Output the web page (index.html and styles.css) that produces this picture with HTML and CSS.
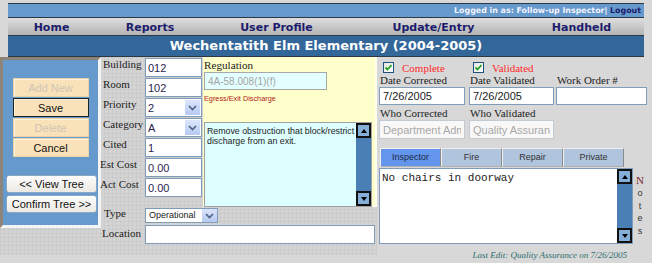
FILE: index.html
```html
<!DOCTYPE html>
<html lang="en">
<head>
<meta charset="utf-8">
<title>Inspection Entry</title>
<link rel="stylesheet" href="styles.css">
</head>
<body>
<header class="hdr">
  <div class="topbar"><span class="who">Logged in as: Follow-up Inspector|</span> <a class="logout" href="#">Logout</a></div>
  <nav class="nav">
    <a href="#">Home</a><a href="#">Reports</a><a href="#">User Profile</a><a href="#">Update/Entry</a><a href="#">Handheld</a>
  </nav>
  <div class="title">Wechentatith Elm Elementary (2004-2005)</div>
</header>
<main class="main">
  <aside class="panel">
    <div class="actions">
      <button class="btn" disabled>Add New</button>
      <button class="btn default">Save</button>
      <button class="btn" disabled>Delete</button>
      <button class="btn">Cancel</button>
    </div>
    <div class="tree">
      <button class="tbtn">&lt;&lt; View Tree</button>
      <button class="tbtn">Confirm Tree &gt;&gt;</button>
    </div>
  </aside>

  <section class="mid">
    <div class="midtop">
      <div class="fields">
        <div class="row"><span class="lbl">Building</span><input class="inp" value="012"></div>
        <div class="row"><span class="lbl">Room</span><input class="inp" value="102"></div>
        <div class="row"><span class="lbl">Priority</span><div class="sel"><span class="val">2</span><span class="arr"><svg viewBox="0 0 9 6" width="9" height="6"><path d="M1 1 L4.5 4.5 L8 1" fill="none" stroke="#4d6185" stroke-width="1.6"/></svg></span></div></div>
        <div class="row"><span class="lbl">Category</span><div class="sel"><span class="val">A</span><span class="arr"><svg viewBox="0 0 9 6" width="9" height="6"><path d="M1 1 L4.5 4.5 L8 1" fill="none" stroke="#4d6185" stroke-width="1.6"/></svg></span></div></div>
        <div class="row"><span class="lbl">Cited</span><input class="inp" value="1"></div>
        <div class="row"><span class="lbl shift">Est Cost</span><input class="inp" value="0.00"></div>
        <div class="row"><span class="lbl shift">Act Cost</span><input class="inp" value="0.00"></div>
      </div>
      <div class="reg">
        <div class="reglbl">Regulation</div>
        <input class="reginp" value="4A-58.008(1)(f)" disabled>
        <div class="regdesc">Egress/Exit Discharge</div>
        <div class="tabox regbox">
          <textarea class="ta regta">Remove obstruction that block/restrict discharge from an exit.</textarea>
          <div class="sb"><span class="sbbtn up"></span><span class="sbbtn down"></span></div>
        </div>
      </div>
    </div>
    <div class="midbot">
      <div class="brow typerow"><span class="lbl2 tlbl">Type</span><div class="sel tsel"><span class="val">Operational</span><span class="arr"><svg viewBox="0 0 9 6" width="9" height="6"><path d="M1 1 L4.5 4.5 L8 1" fill="none" stroke="#4d6185" stroke-width="1.6"/></svg></span></div></div>
      <div class="brow locrow"><span class="lbl2 llbl">Location</span><input class="inp locinp" value=""></div>
    </div>
  </section>

  <section class="right">
    <div class="grid3 checks">
      <div class="chk"><span class="box"><svg viewBox="0 0 11 11" width="11" height="11"><path d="M2.5 5.5 L4.5 7.5 L8.5 3" fill="none" stroke="#21a121" stroke-width="1.8"/></svg></span><span class="chklbl">Complete</span></div>
      <div class="chk"><span class="box"><svg viewBox="0 0 11 11" width="11" height="11"><path d="M2.5 5.5 L4.5 7.5 L8.5 3" fill="none" stroke="#21a121" stroke-width="1.8"/></svg></span><span class="chklbl">Validated</span></div>
      <div></div>
    </div>
    <div class="grid3 rlbls">
      <span>Date Corrected</span><span>Date Validated</span><span>Work Order #</span>
    </div>
    <div class="grid3">
      <input class="rinp w1" value="7/26/2005"><input class="rinp w2" value="7/26/2005"><input class="rinp w3" value="">
    </div>
    <div class="grid3 rlbls rlbls2">
      <span>Who Corrected</span><span>Who Validated</span><span></span>
    </div>
    <div class="grid3">
      <input class="rinp dis w1" value="Department Administrator" disabled><input class="rinp dis w2" value="Quality Assurance" disabled><span></span>
    </div>
    <div class="notes">
      <div class="notesmain">
        <div class="tabs">
          <span class="tab on">Inspector</span><span class="tab">Fire</span><span class="tab">Repair</span><span class="tab">Private</span>
        </div>
        <div class="tabox notebox">
          <textarea class="ta notesta">No chairs in doorway</textarea>
          <div class="sb"><span class="sbbtn up"></span><span class="sbbtn down"></span></div>
        </div>
      </div>
      <div class="vert"><span class="n">N</span><span>o</span><span>t</span><span>e</span><span>s</span></div>
    </div>
    <div class="lastedit">Last Edit: Quality Assurance on 7/26/2005</div>
  </section>
</main>
</body>
</html>
```

FILE: styles.css
```css
* { box-sizing: border-box; }
html, body { margin: 0; padding: 0; }
body {
  width: 652px;
  height: 263px;
  overflow: hidden;
  background: #d8d8d8;
  font-family: "Liberation Serif", serif;
  color: #222;
}

/* ---------- header ---------- */
.hdr {
  margin: 3px 8px 0;
  width: 636px;
  border-top: 1px solid #2c3844;
  border-bottom: 1px solid #2c3844;
}
.topbar {
  height: 14px;
  background: #6699cc;
  border-bottom: 1px solid #2c3844;
  text-align: right;
  padding-right: 3px;
  font: bold 7.9px/13px "DejaVu Sans", sans-serif;
  color: #f2f2ff;
}
.topbar .logout { color: #1c1c6c; text-decoration: none; }
.nav {
  height: 18px;
  border-bottom: 1px solid #2c3844;
  background: linear-gradient(#dedede, #b4b4b4);
  display: grid;
  grid-template-columns: 87px 110px 143px 171px 125px;
  font: bold 11px/15px "DejaVu Sans", sans-serif;
  padding-top: 2px;
}
.nav a { color: #1c1c6c; text-decoration: none; text-align: center; }
.title {
  height: 20px;
  background: #336699;
  color: #fff;
  text-align: center;
  font: bold 13px/20px "DejaVu Sans", sans-serif;
}

/* ---------- main ---------- */
.main {
  display: flex;
  height: 198px;
  background-color: #d4d4d4;
  background-image:
    linear-gradient(rgba(0,0,0,0.035) 1px, transparent 1px),
    linear-gradient(90deg, rgba(0,0,0,0.035) 1px, transparent 1px);
  background-size: 4px 4px;
}

.panel {
  width: 101px;
  height: 171px;
  flex: none;
  background: #6699cc;
  border: 3px solid;
  border-color: #8c8478 #f4f4f4 #f4f4f4 #8c8478;
  display: flex;
  flex-direction: column;
  align-items: center;
  padding-top: 18px;
}
.actions { display: flex; flex-direction: column; gap: 1px; }
.btn {
  width: 76px;
  height: 19px;
  margin: 0;
  padding: 0;
  background: #f9e1b9;
  border: 1px solid #e8d2a8;
  box-shadow: inset 1px 1px 0 #fff3dc;
  font: 11px "Liberation Sans", sans-serif;
  color: #111;
}
.btn:disabled { color: #cfc5b5; }
.btn.default { border-color: #222; }
.tree { display: flex; flex-direction: column; gap: 2px; margin-top: 18px; margin-left: 2px; }
.tbtn {
  width: 91px;
  height: 18px;
  margin: 0;
  padding: 0;
  background: linear-gradient(#fdfdfd, #ece9e2);
  border: 1px solid #8aa8c6;
  border-radius: 3px;
  font: 11px "Liberation Sans", sans-serif;
  color: #111;
}

.mid { width: 276px; flex: none; display: flex; flex-direction: column; }
.midtop { display: flex; height: 150px; }
.fields { width: 102px; padding: 1px 0 0 2px; }
.row { display: flex; height: 20px; }
.lbl {
  width: 42px;
  font-size: 11px;
  line-height: 13px;
  white-space: nowrap;
}
.lbl.shift { margin-left: -3px; width: 45px; }
.inp {
  width: 57px;
  height: 19px;
  margin: 0;
  border: 1px solid #7f9db9;
  background: #fff;
  padding: 1px 2px 0;
  font: 11px "Liberation Sans", sans-serif;
  color: #2b1d4f;
}
.sel {
  width: 57px;
  height: 19px;
  border: 1px solid #7f9db9;
  background: #fff;
  display: flex;
  padding: 1px;
}
.sel .val { flex: 1; font: 11px/17px "Liberation Sans", sans-serif; color: #2b1d4f; padding-left: 1px; }
.sel .arr {
  width: 15px;
  background: linear-gradient(#dbe5fb, #b8caf2);
  display: flex;
  align-items: center;
  justify-content: center;
}

.reg {
  width: 174px;
  background: #ffffcc;
  border-right: 2px solid #fffff0;
  border-bottom: 2px solid #fffff0;
  padding: 1px 0 0 1px;
}
.reglbl { font-size: 11.2px; line-height: 14px; }
.reginp {
  display: block;
  width: 123px;
  height: 18px;
  margin: 0;
  border: 1px solid #a8a8a8;
  background: #e4ffff;
  padding: 0 3px;
  font: 10px "Liberation Sans", sans-serif;
  color: #a4a4a4;
}
.regdesc {
  margin-top: 4px;
  font: 7.3px/9px "Liberation Sans", sans-serif;
  color: #b02020;
}
.tabox {
  display: flex;
  border: 1px solid #a0a0a0;
}
.regbox { margin-top: 19px; width: 168px; height: 85px; background: #deffff; }
.ta {
  flex: 1;
  border: 0;
  margin: 0;
  resize: none;
  overflow: hidden;
  background: transparent;
  outline: none;
}
.regta { font: 8.8px/10px "Liberation Sans", sans-serif; color: #222; padding: 3px 0 3px 2px; }
.sb {
  width: 15px;
  flex: none;
  background: #4a7fb5;
  display: flex;
  flex-direction: column;
  justify-content: space-between;
}
.sbbtn {
  width: 15px;
  height: 15px;
  border: 2px solid #111;
  background: #86afd8;
  position: relative;
}
.sbbtn::after {
  content: "";
  position: absolute;
  left: 3px;
  border-left: 3.5px solid transparent;
  border-right: 3.5px solid transparent;
}
.sbbtn.up::after { top: 4px; border-bottom: 4px solid #000; }
.sbbtn.down::after { top: 4px; border-top: 4px solid #000; }

.midbot { padding-left: 2px; }
.brow { display: flex; }
.typerow { height: 17px; }
.lbl2 { width: 42px; font-size: 11px; line-height: 13px; }
.tlbl { padding-left: 1px; }
.tsel { width: 73px; height: 15px; padding: 0; margin-top: 1px; }
.tsel .val { font: 9px/13px "Liberation Sans", sans-serif; color: #222; padding-left: 3px; }
.tsel .arr { width: 15px; }
.locinp { width: 230px; margin-top: 1px; }
.llbl { padding-top: 3px; margin-left: -1px; width: 43px; }

/* ---------- right ---------- */
.right { flex: 1; padding-left: 2px; background: #d8d8d8; }
.grid3 { display: grid; grid-template-columns: 90px 87px auto; }
.checks { padding-top: 4px; height: 17px; }
.chk { display: flex; align-items: center; padding-left: 4px; }
.box {
  width: 11px; height: 11px;
  border: 1px solid #1c5180;
  background: linear-gradient(135deg, #e6e6e0, #fff);
  display: flex;
}
.box svg { margin: -1px; }
.chklbl { margin-left: 8px; font-size: 11px; color: #ff2a2a; line-height: 12px; }
.rlbls { font-size: 11px; line-height: 13px; padding-left: 1px; }
.rinp {
  height: 18px;
  margin: 0;
  border: 1px solid #7f9db9;
  background: #fff;
  padding: 0 3px;
  font: 11px "Liberation Sans", sans-serif;
  color: #222;
}
.w1 { width: 86px; }
.w2 { width: 85px; }
.w3 { width: 91px; }
.rlbls2 { padding-top: 2px; height: 15px; }
.rinp.dis { height: 19px; background: #f8f8f8; border-color: #c2cad2; color: #a8a8a8; }

.notes { display: flex; margin-top: 9px; }
.notesmain { width: 254px; }
.tabs { display: flex; margin-left: 1px; height: 20px; }
.tab {
  width: 61px;
  height: 19px;
  background: #b0c4de;
  border: 1px solid;
  border-color: #f0f0f0 #8a8a8a #b0b0b0 #f0f0f0;
  font: 9px/17px "Liberation Sans", sans-serif;
  color: #333;
  text-align: center;
}
.tab.on { background: #6495ed; color: #1c2a48; }
.notebox { height: 76px; background: #fff; border-color: #7f9db9; }
.notesta { font: 11px/13px "Liberation Mono", monospace; color: #222; padding: 3px 2px; }
.vert {
  display: flex;
  flex-direction: column;
  align-items: center;
  width: 14px;
  padding-top: 26px;
  font: 9px/12.5px "Liberation Sans", sans-serif;
  color: #333;
}
.vert .n { font: 11px/13px "Liberation Serif", serif; color: #7a2a2a; }
.lastedit {
  margin-top: 6px;
  width: 248px;
  text-align: right;
  font: italic 9px/10px "Liberation Serif", serif;
  color: #2e6e6e;
}
```
